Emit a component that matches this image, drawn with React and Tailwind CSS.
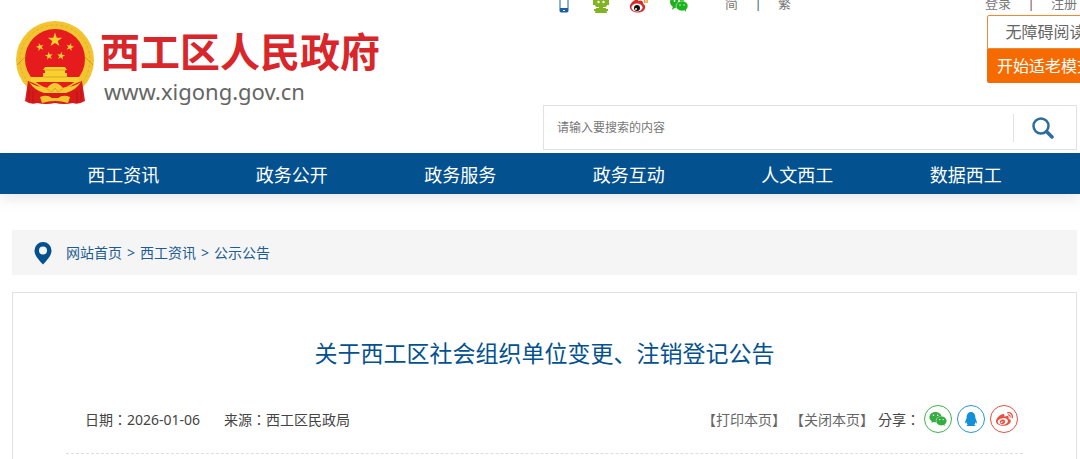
import React from 'react';
import { FaWeixin, FaQq, FaWeibo } from 'react-icons/fa';

const navItems = ['西工资讯', '政务公开', '政务服务', '政务互动', '人文西工', '数据西工'];

const crumbs = ['网站首页', '西工资讯', '公示公告'];

const shares = [
  { label: '微信', icon: <FaWeixin className="h-[18px] w-[18px]" />, style: 'border-[#3eb24a] text-[#35ad42]' },
  { label: 'QQ', icon: <FaQq className="h-[14px] w-[14px]" />, style: 'border-[#2a95d6] text-[#1590d8]' },
  { label: '微博', icon: <FaWeibo className="h-[17px] w-[17px]" />, style: 'border-[#e8503f] text-[#e8503f]' }
];

const STAR = '0,-10 2.3,-3.1 9.5,-3.1 3.7,1.2 5.9,8.1 0,3.9 -5.9,8.1 -3.7,1.2 -9.5,-3.1 -2.3,-3.1';

const Emblem = () => (
  <svg viewBox="0 0 78 84" className="h-[84px] w-[78px] shrink-0" aria-hidden="true">
    {/* wheat ring */}
    <ellipse cx="39" cy="39" rx="39" ry="39" fill="#f3c431" />
    <ellipse cx="39" cy="39" rx="35" ry="35" fill="none" stroke="#e5ae28" strokeWidth="1" strokeDasharray="3 2" />
    <circle cx="39" cy="38" r="30" fill="#e51b1d" />
    <path d="M1 44 L9 36 M77 44 L69 36" stroke="#d09a20" strokeWidth="1" />
    <g fill="#f8d02f">
      <polygon points={STAR} transform="translate(39 19) scale(.75)" />
      <polygon points={STAR} transform="translate(24 26) rotate(-15) scale(.42)" />
      <polygon points={STAR} transform="translate(54 26) rotate(15) scale(.42)" />
      <polygon points={STAR} transform="translate(33 35) rotate(-8) scale(.42)" />
      <polygon points={STAR} transform="translate(45 35) rotate(8) scale(.42)" />
      {/* gate tower */}
      <path d="M29 46h20l2 3H27zM29 49h20v3H29zM27 52h24v5H27zM15 56h48v5H15z" />
    </g>
    <path d="M28 49h22M27 56h24" stroke="#dfa526" strokeWidth="1" />
    {/* drapes and knot */}
    <path d="M12 60 Q22 63 27 69 L51 69 Q56 63 66 60 L69 80 Q62 84 57 82 Q48 84 39 82 Q30 84 21 82 Q15 84 9 80 Z" fill="#d81a1a" />
    <path d="M13 68v12M17 70v12M61 70v12M65 68v12" stroke="#b51316" strokeWidth="1" />
    <path d="M13 61 Q20 66 31 67 Q35 62 39 62 Q43 62 47 67 Q58 66 65 61 Q60 69 50 72 L28 72 Q18 69 13 61 Z" fill="#f6ca30" />
    <path d="M31 68 L36 71 L39 67 L42 71 L47 68" stroke="#dfa526" strokeWidth="1" fill="none" />
    <path d="M24 76 Q31 73 36 77 L42 77 Q47 73 54 76 L52 82 Q39 78 26 82 Z" fill="#f4c42d" />
    <path d="M33 74h12l-3 3h-6z" fill="#d81a1a" />
  </svg>
);

const PhoneIcon = () => (
  <svg viewBox="0 0 10 18" className="h-[18px] w-[10px]" aria-hidden="true">
    <rect x="1" y="1" width="8" height="16" rx="1" fill="#fff" stroke="#1c62a8" strokeWidth="1" />
    <path d="M1 13h8v4H1z" fill="#1c5fa5" />
    <path d="M4 15h2v1H4z" fill="#fff" />
  </svg>
);

const RobotIcon = () => (
  <svg viewBox="0 0 16 20" className="h-[20px] w-[16px]" aria-hidden="true">
    <g fill="#82b322">
      <rect x="2" y="1" width="12" height="12" rx="2" />
      <path d="M0 6h2v5H0zM14 6h2v5h-2zM6 13h4v2H6zM3 14h10l1 5H2z" />
      <path d="M1 15h3v2H1zM12 15h3v2h-3z" />
    </g>
    <circle cx="5.500" cy="8" r="1.200" fill="#fff" />
    <circle cx="10.500" cy="8" r="1.200" fill="#fff" />
  </svg>
);

const WeiboColorIcon = () => (
  <svg viewBox="0 0 20 20" className="h-[20px] w-[20px]" aria-hidden="true">
    <path d="M8 5 C3 7 0 11 1 14 C3 20 15 20 16 14 C17 11 14 10 14 9 C14 6 11 6 9 7 C10 5 9 4 8 5Z" fill="#d52c2b" />
    <ellipse cx="8" cy="13.500" rx="5.500" ry="4" fill="#fff" />
    <circle cx="8" cy="14" r="3" fill="#111" />
    <circle cx="7" cy="15" r="1" fill="#fff" />
    <path d="M12 5 Q16 4 16 9 M12 2 Q19 1 18 9" fill="none" stroke="#f29a2c" strokeWidth="1.500" />
  </svg>
);

const WechatIcon = () => (
  <svg viewBox="0 0 20 18" className="h-[18px] w-[20px]" aria-hidden="true">
    <ellipse cx="8" cy="7" rx="7" ry="6" fill="#1fae1c" />
    <path d="M4 11l-1 4 4-3z" fill="#1fae1c" />
    <ellipse cx="13" cy="11" rx="6" ry="5" fill="#19b51b" stroke="#fff" strokeWidth=".5" />
    <path d="M15 14l2 3 0-4z" fill="#19b51b" />
    <g fill="#fff">
      <circle cx="5.500" cy="6" r=".9" />
      <circle cx="10" cy="6" r=".9" />
      <circle cx="11" cy="10" r=".7" />
      <circle cx="15" cy="10" r=".7" />
    </g>
  </svg>
);

const PinIcon = () => (
  <svg viewBox="0 0 18 24" className="h-[24px] w-[18px]" aria-hidden="true">
    <path fillRule="evenodd" d="M9 1a8.500 8.500 0 0 0-8.500 8.500C.5 15 5 19 9 23.500 13 19 17.500 15 17.500 9.500A8.500 8.500 0 0 0 9 1zm0 4.500a4 4 0 1 1 0 8 4 4 0 0 1 0-8z" fill="#045190" />
  </svg>
);

const SearchIcon = () => (
  <svg viewBox="0 0 22 22" className="h-[22px] w-[22px]" fill="none" stroke="#2c6c9f" aria-hidden="true">
    <circle cx="9" cy="9" r="7.500" strokeWidth="2.500" />
    <path d="M14.500 14.500 L20 20" strokeWidth="3.500" strokeLinecap="round" />
  </svg>
);

const App = () => {
  return (
    <div className="relative overflow-hidden bg-white font-['Noto_Sans','Noto_Sans_CJK_SC',sans-serif] text-[#444]">
      {/* Header */}
      <header className="flex justify-between">
        <a href="#home" className="mt-[21px] ml-4 flex shrink-0 items-start gap-[6px]">
          <Emblem />
          <span className="flex flex-col">
            <span className="mt-1 font-['Noto_Sans_CJK_SC',sans-serif] text-[40px] leading-[50px] font-bold text-[#d9262a]">西工区人民政府</span>
            <span className="ml-1 text-[22px] leading-8 text-[#666]">www.xigong.gov.cn</span>
          </span>
        </a>

        <div className="mr-[3px] w-[534px]">
          {/* Top links */}
          <div className="-mt-2 flex h-6 items-center justify-between text-[13px] text-[#777]">
            <div className="flex items-center">
              <a href="#mobile" aria-label="手机版" className="ml-4"><PhoneIcon /></a>
              <a href="#robot" aria-label="智能问答" className="ml-6"><RobotIcon /></a>
              <a href="#weibo" aria-label="微博" className="ml-5"><WeiboColorIcon /></a>
              <a href="#wechat" aria-label="微信" className="ml-5"><WechatIcon /></a>
              <a href="#jian" className="ml-9">简</a>
              <span className="mx-4 w-2 text-center text-[#35607c]">|</span>
              <a href="#fan">繁</a>
            </div>
            <div className="flex items-center">
              <a href="#login">登录</a>
              <span className="mx-4 w-2 text-center text-[#744a63]">|</span>
              <a href="#register">注册</a>
            </div>
          </div>

          <form className="mt-[89px] flex h-[45px] items-center border border-[#e2e2e2]">
            <input
              type="text"
              aria-label="搜索"
              placeholder="请输入要搜索的内容"
              className="h-full min-w-0 flex-1 px-[13px] text-[12px] outline-none placeholder:text-[#777]"
            />
            <button type="button" aria-label="搜索" className="flex h-7 w-[63px] items-center border-l border-[#e2e2e2] pl-[18px]">
              <SearchIcon />
            </button>
          </form>
        </div>
      </header>

      {/* Accessibility buttons floating at the window edge */}
      <div className="absolute top-[15px] -right-6 flex w-[117px] flex-col text-[16px]">
        <button type="button" className="h-[34px] rounded-t-[2px] border border-solid border-[#f08a30] bg-white text-[#666]">无障碍阅读</button>
        <button type="button" className="h-[34px] rounded-b-[2px] bg-[#f56b00] px-[10px] text-left whitespace-nowrap text-white">开始适老模式</button>
      </div>

      <nav className="relative mt-[3px] bg-[#045190] pt-[3px] pr-[30px] pl-[39px] shadow-[0_6px_12px_rgba(0,0,0,0.08)]">
        <ul className="grid grid-cols-6 text-center text-[18px] leading-[38px] text-white">
          {navItems.map((item) => (
            <li key={item}>
              <a href="#nav">{item}</a>
            </li>
          ))}
        </ul>
      </nav>

      <main className="mt-9 mr-[3px] ml-3">
        {/* Breadcrumb */}
        <div className="flex h-[45px] items-center bg-[#f5f5f5] pl-[22px] text-[14px] text-[#1d5c94]">
          <PinIcon />
          <div className="ml-[14px] flex items-center">
            {crumbs.map((crumb, index) => (
              <React.Fragment key={crumb}>
                {index > 0 && <span className="mx-[5px]">&gt;</span>}
                <a href="#crumb">{crumb}</a>
              </React.Fragment>
            ))}
          </div>
        </div>

        {/* Article */}
        <article className="mt-[17px] border border-b-0 border-[#e2e2e2] px-[53px] pb-5">
          <h1 className="pt-[42px] text-center text-[23px] leading-9 text-[#045190]">关于西工区社会组织单位变更、注销登记公告</h1>
          <div className="mt-[34px] flex items-center justify-between border-b border-dashed border-[#ddd] pr-[5px] pb-5 pl-[19px] font-['Noto_Sans','Noto_Sans_CJK_TC',sans-serif] text-[14px]">
            <div className="flex gap-6">
              <span>日期：2026-01-06</span>
              <span>来源：西工区民政局</span>
            </div>
            <div className="flex items-center gap-1">
              <button type="button" className="text-[#666]">【打印本页】</button>
              <button type="button" className="text-[#666]">【关闭本页】</button>
              <span>分享：</span>
              <div className="flex gap-[5px]">
                {shares.map((share) => (
                  <a
                    key={share.label}
                    href="#share"
                    aria-label={share.label}
                    className={`flex h-7 w-7 items-center justify-center rounded-full border ${share.style}`}
                  >
                    {share.icon}
                  </a>
                ))}
              </div>
            </div>
          </div>
        </article>
      </main>
    </div>
  );
};

export default App;
